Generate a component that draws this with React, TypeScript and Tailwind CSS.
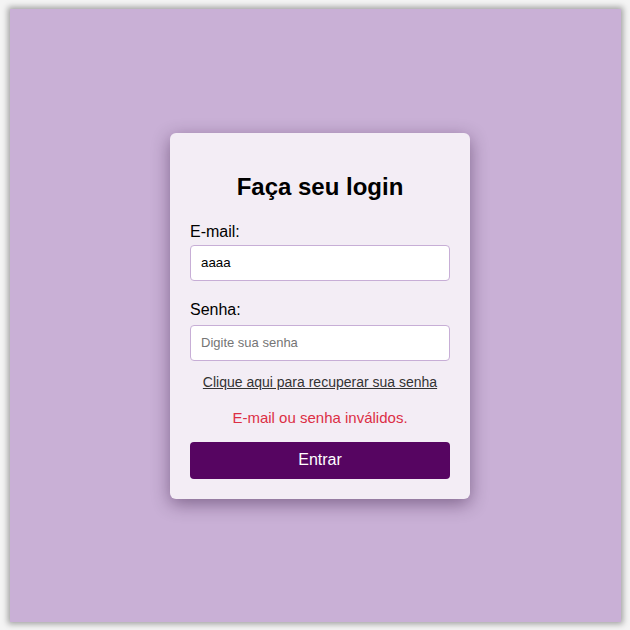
import React from "react";

export default function App() {
  return (
    <div
      className="w-[630px] h-[630px] bg-[#f4f4f4] pl-[10px] pt-[9px] pr-[9px] pb-[8px]"
      style={{ fontFamily: '"Liberation Sans", Arial, sans-serif' }}
    >
      <div className="w-full h-full bg-[#c9b0d6] shadow-[0_0_6px_2px_rgba(0,0,0,0.35)] flex items-center justify-center pl-[9px]">
        <div className="w-[300px] bg-[#f3edf5] rounded-[6px] px-5 pt-5 pb-5 shadow-[0_5px_18px_rgba(40,10,50,0.45)]">
          <h2 className="text-[24px] font-bold text-black text-center leading-[28px] mt-5 mb-[22px]">
            Faça seu login
          </h2>
          <label className="block text-[16px] leading-[18px] text-black mb-[4px]">E-mail:</label>
          <input
            className="block w-full h-[36px] bg-white border border-[#c7aed6] rounded-[4px] px-[10px] text-[13.33px] text-black outline-none"
            defaultValue="aaaa"
            style={{ fontFamily: '"Liberation Sans", Arial, sans-serif' }}
          />
          <label className="block text-[16px] leading-[18px] text-black mt-5 mb-[6px]">Senha:</label>
          <input
            type="password"
            placeholder="Digite sua senha"
            className="block w-full h-[36px] bg-white border border-[#c7aed6] rounded-[4px] px-[10px] text-[13px] text-black placeholder:text-[#757575] outline-none"
            style={{ fontFamily: '"Liberation Sans", Arial, sans-serif' }}
          />
          <div className="text-center mt-[13px] leading-[16px]">
            <a href="#" className="text-[14px] text-[#333333] underline">
              Clique aqui para recuperar sua senha
            </a>
          </div>
          <p className="text-center text-[15px] leading-[18px] text-[#dc2f45] mt-[19px]">
            E-mail ou senha inválidos.
          </p>
          <button
            className="block w-full h-[37px] mt-[15px] bg-[#560561] text-white text-[16px] rounded-[4px]"
            style={{ fontFamily: '"Liberation Sans", Arial, sans-serif' }}
          >
            Entrar
          </button>
        </div>
      </div>
    </div>
  );
}
